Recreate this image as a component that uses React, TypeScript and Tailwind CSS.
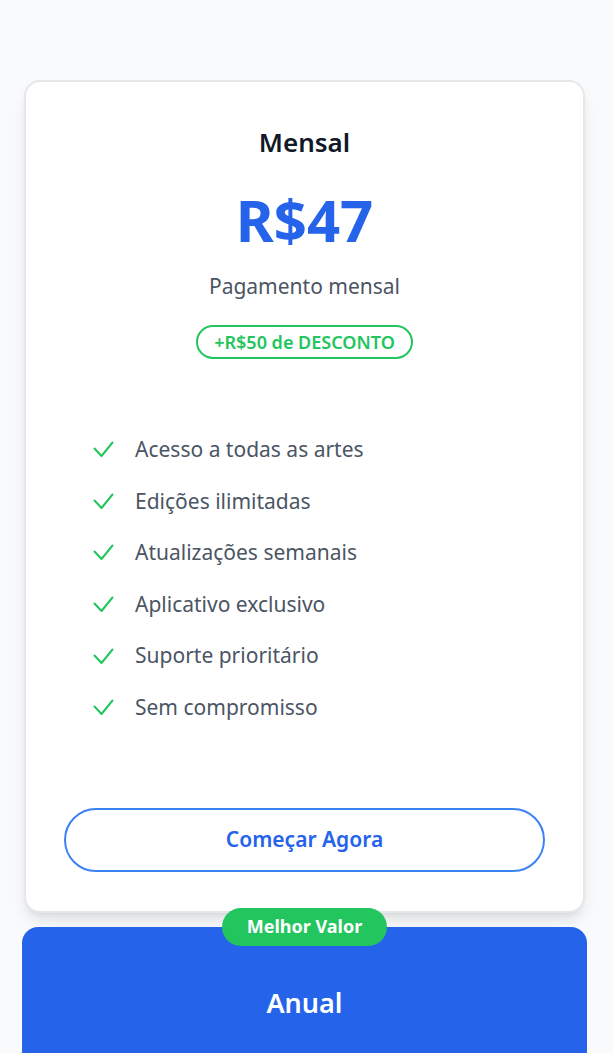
import React from "react"

const features=[
    "Acesso a todas as artes",
    "Edições ilimitadas",
    "Atualizações semanais",
    "Aplicativo exclusivo",
    "Suporte prioritário",
    "Sem compromisso",
]

const CheckMark=()=>(
    <svg width="21" height="17" viewBox="0 0 21 17" fill="none" className="shrink-0">
        <polyline points="1.5,7.5 8.5,15 19.5,1.5" stroke="#22c55e" strokeWidth="2" strokeLinecap="round" strokeLinejoin="round"/>
    </svg>
)

export const PlanCard=()=>{
    return(
        <div className="bg-white border-2 border-[#e5e7eb] rounded-2xl shadow-lg px-[38px] pt-[42px] pb-[39px] flex flex-col items-center">
            <h2 className="text-[26px] leading-[36px] font-semibold text-[#111827]">Mensal</h2>
            <p className="mt-[28px] text-[58px] leading-[64px] font-bold text-[#2563eb]">R$47</p>
            <p className="mt-5 text-[21px] leading-[28px] text-[#4b5563]">Pagamento mensal</p>
            <span className="mt-[25px] h-[34px] px-4 flex items-center rounded-full border-2 border-[#22c55e] text-[#22c55e] text-[18px] font-semibold">+R$50 de DESCONTO</span>
            <ul className="self-stretch mt-[65px] pl-[29px]">
                {features.map((f)=>(
                    <li key={f} className="h-[51.6px] flex items-center gap-[21px]">
                        <CheckMark/>
                        <span className="text-[21px] text-[#4b5563]">{f}</span>
                    </li>
                ))}
            </ul>
            <button className="mt-[74px] self-stretch h-16 rounded-full border-2 border-[#3b82f6] text-[#2563eb] text-[21px] font-semibold">Começar Agora</button>
        </div>
    )
}

export default function App(){
    return(
        <div className="min-h-screen bg-[#f9fafb] pl-6 pr-7 pt-20 overflow-hidden" style={{fontFamily:'"Noto Sans", "Open Sans", sans-serif'}}>
            <PlanCard/>
            <div className="relative mt-[14px] -mx-0.5 bg-[#2563eb] rounded-t-2xl h-[140px] flex justify-center">
                <span className="absolute -top-[19px] h-[38px] px-[25px] flex items-center rounded-full bg-[#22c55e] text-white text-[18px] font-bold">Melhor Valor</span>
                <h2 className="mt-[58px] text-[27px] leading-[36px] font-semibold text-white">Anual</h2>
            </div>
        </div>
    )
}
